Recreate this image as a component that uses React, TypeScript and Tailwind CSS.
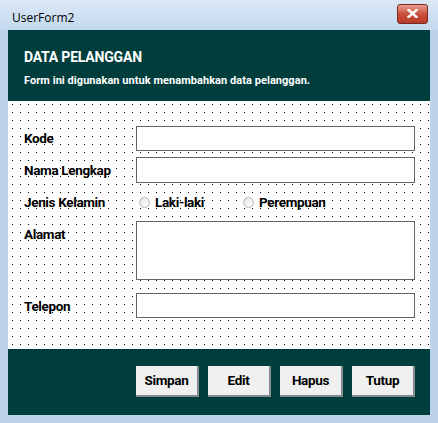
import type { ReactNode } from "react";

const LABEL_FONT = "font-['Roboto','DejaVu_Sans_Condensed',sans-serif]";

function Field({ label, children, top }: { label: string; children: ReactNode; top?: boolean }) {
  return (
    <div className={`flex ${top ? "items-start" : "items-center"}`}>
      <div className={`w-[128px] pl-[16px] text-[13.5px] font-bold tracking-[-0.35px] text-black ${LABEL_FONT} ${top ? "pt-[3px]" : ""}`}>
        {label}
      </div>
      {children}
    </div>
  );
}

function TextBox({ h }: { h: number }) {
  return (
    <div
      className="w-[279px] border border-[#646464] bg-white"
      style={{ height: h }}
    />
  );
}

function Radio({ label }: { label: string }) {
  return (
    <div className="flex items-center gap-[5px]">
      <span className="h-[11px] w-[11px] rounded-full border border-[#b8b8b8] bg-gradient-to-br from-[#e6e6e6] to-white" />
      <span className={`text-[13.5px] font-bold tracking-[-0.35px] text-black ${LABEL_FONT}`}>{label}</span>
    </div>
  );
}

function Btn({ children }: { children: ReactNode }) {
  return (
    <button className={`h-[31px] w-[63px] border-r-2 border-b-2 border-r-[#8a8a8a] border-b-[#8a8a8a] bg-[#f0f0f0] text-[13.5px] font-bold tracking-[-0.35px] text-black ${LABEL_FONT}`}>
      {children}
    </button>
  );
}

export default function App() {
  return (
    <div className="flex h-[423px] w-[438px] flex-col bg-[#bcd3ea] font-['Open_Sans',sans-serif]">
      {/* title bar */}
      <div className="flex h-[30px] items-center justify-between bg-gradient-to-b from-[#dbe8f6] to-[#c4d9ef]">
        <span className="pl-[12px] pt-[6px] text-[12px] text-black">UserForm2</span>
        <div className="mr-[10px] mt-[-3px] flex h-[20px] w-[31px] items-center justify-center rounded-[3px] border border-[#7a2a22] bg-gradient-to-b from-[#e8a090] via-[#c9503c] to-[#b83a26]">
          <svg width="11" height="9" viewBox="0 0 11 9" aria-hidden>
            <path d="M1.5 1 L9.5 8 M9.5 1 L1.5 8" stroke="white" strokeWidth="2.4" strokeLinecap="square" />
          </svg>
        </div>
      </div>

      {/* client area */}
      <div className="mx-[8px] flex h-[385px] flex-col">
        <div className="h-[71px] bg-[#003e3e] px-[16px] pt-[18px] text-white">
          <div className={`text-[14px] font-bold leading-[18px] tracking-[-0.2px] ${LABEL_FONT}`}>DATA PELANGGAN</div>
          <div className={`mt-[8px] text-[11px] font-bold leading-[14px] tracking-[0.05px] ${LABEL_FONT}`}>
            Form ini digunakan untuk menambahkan data pelanggan.
          </div>
        </div>

        <div className="flex h-[248px] flex-col bg-white bg-[radial-gradient(circle_at_0.5px_0.5px,#000_0.8px,transparent_0.9px)] bg-[length:8px_8px] bg-[position:4px_3px] pt-[25px]">
          <Field label="Kode">
            <TextBox h={25} />
          </Field>
          <div className="mt-[6px]">
            <Field label="Nama Lengkap">
              <TextBox h={26} />
            </Field>
          </div>
          <div className="mt-[9px]">
            <Field label="Jenis Kelamin">
              <div className="flex gap-[39px] pl-[3px]">
                <Radio label="Laki-laki" />
                <Radio label="Perempuan" />
              </div>
            </Field>
          </div>
          <div className="mt-[9px]">
            <Field label="Alamat" top>
              <TextBox h={59} />
            </Field>
          </div>
          <div className="mt-[13px]">
            <Field label="Telepon">
              <TextBox h={25} />
            </Field>
          </div>
        </div>

        <div className="flex h-[66px] justify-end gap-[9px] bg-[#003e3e] pr-[15px] pt-[17px]">
          <Btn>Simpan</Btn>
          <Btn>Edit</Btn>
          <Btn>Hapus</Btn>
          <Btn>Tutup</Btn>
        </div>
      </div>
    </div>
  );
}
